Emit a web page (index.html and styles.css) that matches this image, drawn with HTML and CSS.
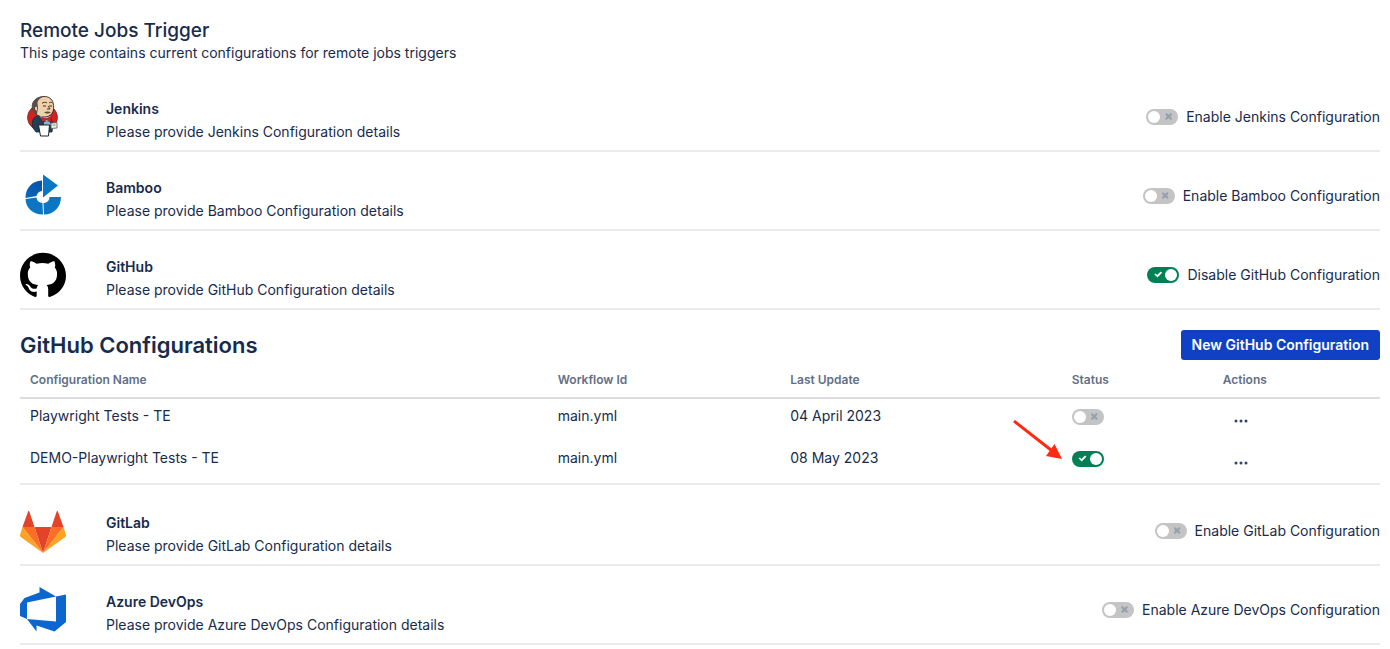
FILE: index.html
```html
<!DOCTYPE html>
<html lang="en">
<head>
<meta charset="utf-8">
<meta name="viewport" content="width=device-width, initial-scale=1">
<title>Remote Jobs Trigger</title>
<link rel="stylesheet" href="styles.css">
</head>
<body>
<main class="page">
  <header class="page-header">
    <h1 class="page-title">Remote Jobs Trigger</h1>
    <p class="page-intro">This page contains current configurations for remote jobs triggers</p>
  </header>

  <section class="provider">
    <svg class="provider-logo" viewBox="0 0 46 46" aria-hidden="true">
      <ellipse cx="22.500" cy="23.500" rx="15" ry="13.500" fill="#d6201f" stroke="#5c3030" stroke-width=".8"/>
      <path d="M13 34c-1-4-1-8 1-10 2-2 5-3 8-3 6 0 10 4 11 9l-1 8H16z" fill="#1f4055" stroke="#182b37" stroke-width=".8"/>
      <path d="M16 20c-4-3-5-9-2-13 2-3 6-4.500 10-4.500 5 0 8 2.500 9 6 1 4 1 8-1 11-2 2-4 3.500-7 3.500-4 0-7-1-9-3z" fill="#efd0ad" stroke="#352822" stroke-width=".9"/>
      <path d="M16 20c-4-3-5-9-2-13 2-3 6-4.500 10-4.500-3 1-6 3-6.500 6L18 14l-1 6z" fill="#55504c"/>
      <path d="M17 13c-2.500-1-3 2.500 0 4z" fill="#efd0ad"/>
      <path d="M22 9.500c1-1.500 4-1.500 5-.5m2 0c1-1 2.500-1 3.500 0M23 12h3m3 0h3M28 12l2 3h-3" fill="none" stroke="#49352c"/>
      <path d="M24 18.500c2-1.500 5-1.500 7 0-2 1.500-5 1.500-7 0z" fill="#71473c"/>
      <path d="M20 22l3 5h7l1-5-5 1.500z" fill="#e6e8ea"/>
      <path d="M21.500 23l1 5 4-2 5 2-.5-5.500-4.500 2z" fill="#d6201f" stroke="#6d1f1d" stroke-width=".5"/>
      <path d="M24 28l3-1 3 1 1 3h-7z" fill="#8ab5cf"/>
      <path d="M31 29l6-.5v5.500l-6 .5z" fill="#edeee9" stroke="#555" stroke-width=".8"/>
      <path d="M32.500 31h3" stroke="#777" stroke-width=".8"/>
      <path d="M18.500 31h11l-1 11h-8z" fill="#fff" stroke="#222"/>
    </svg>
    <div class="provider-text">
      <h2 class="provider-name">Jenkins</h2>
      <p class="provider-note">Please provide Jenkins Configuration details</p>
    </div>
    <label class="toggle-label"><input class="toggle" type="checkbox" role="switch">Enable Jenkins Configuration</label>
  </section>

  <section class="provider">
    <svg class="provider-logo" viewBox="0 0 46 46" aria-hidden="true">
      <defs>
        <linearGradient id="bamboo-shade" x1="0" y1="1" x2="1" y2="0">
          <stop offset="0" stop-color="#0a66b8"/><stop offset="1" stop-color="#0752a8"/>
        </linearGradient>
      </defs>
      <path d="M23 1.500L38 12.500 23 24.500z" fill="#0a76c4"/>
      <path d="M22 7.500v10.500a6.500 6.500 0 0 0-5.500 5L5.500 25C5.500 15 12 8 22 7.500z" fill="url(#bamboo-shade)"/>
      <path d="M5.500 26l11-1.500a6.500 6.500 0 0 0 6 5.500l.5 11.500C13 41.500 6 35.500 5.500 26z" fill="#0a76c4"/>
      <path d="M29.500 24h11.500c0 10-7 17.500-17 17.500L23.500 30c3.500 0 6-2.500 6-6z" fill="#0a76c4"/>
    </svg>
    <div class="provider-text">
      <h2 class="provider-name">Bamboo</h2>
      <p class="provider-note">Please provide Bamboo Configuration details</p>
    </div>
    <label class="toggle-label"><input class="toggle" type="checkbox" role="switch">Enable Bamboo Configuration</label>
  </section>

  <section class="provider">
    <svg class="provider-logo" viewBox="0 0 46 46" aria-hidden="true">
      <path fill-rule="evenodd" d="M23 .8C10.300.8 0 11.100 0 23.800c0 9.800 6.300 18.100 15.100 21.100 1.200.2 1.600-.5 1.600-1.100v-4.200c-6.400 1.400-7.700-2.900-7.700-2.900-1-2.700-2.600-3.400-2.600-3.400-2.100-1.400.2-1.400.2-1.400 2.300.2 3.500 2.400 3.500 2.400 2 3.500 5.400 2.500 6.700 1.900.2-1.500.8-2.500 1.500-3.100-5.100-.6-10.500-2.500-10.500-11.400 0-2.500.9-4.600 2.400-6.200-.2-.6-1-2.900.2-6.100 0 0 1.900-.6 6.300 2.400 3.700-1 7.800-1 11.500 0 4.400-3 6.300-2.400 6.300-2.400 1.300 3.200.5 5.500.2 6.100 1.500 1.600 2.400 3.700 2.400 6.200 0 8.900-5.400 10.800-10.500 11.400.8.700 1.600 2.100 1.600 4.300v6.400c0 .6.400 1.300 1.600 1.100C39.700 41.900 46 33.600 46 23.800 46 11.100 35.700.8 23 .8z"/>
    </svg>
    <div class="provider-text">
      <h2 class="provider-name">GitHub</h2>
      <p class="provider-note">Please provide GitHub Configuration details</p>
    </div>
    <label class="toggle-label"><input class="toggle" type="checkbox" role="switch" checked>Disable GitHub Configuration</label>
  </section>

  <section class="configs">
    <div class="configs-header">
      <h2 class="configs-title">GitHub Configurations</h2>
      <button class="primary-button" type="button">New GitHub Configuration</button>
    </div>
    <table class="configs-table">
      <colgroup><col class="col-name"><col class="col-workflow"><col class="col-update"><col class="col-status"><col class="col-actions"></colgroup>
      <thead>
        <tr><th scope="col">Configuration Name</th><th scope="col">Workflow Id</th><th scope="col">Last Update</th><th scope="col">Status</th><th scope="col">Actions</th></tr>
      </thead>
      <tbody>
        <tr>
          <td>Playwright Tests - TE</td><td>main.yml</td><td>04 April 2023</td>
          <td><div class="status"><input class="toggle" type="checkbox" role="switch" aria-label="Playwright Tests - TE status"></div></td>
          <td><button class="more-button" type="button" aria-label="Actions for Playwright Tests - TE"><svg class="more-icon" viewBox="0 0 14 4" aria-hidden="true"><circle cx="2" cy="2" r="1.500"/><circle cx="7" cy="2" r="1.500"/><circle cx="12" cy="2" r="1.500"/></svg></button></td>
        </tr>
        <tr>
          <td>DEMO-Playwright Tests - TE</td><td>main.yml</td><td>08 May 2023</td>
          <td><div class="status"><input class="toggle" type="checkbox" role="switch" checked aria-label="DEMO-Playwright Tests - TE status">
            <svg class="pointer-arrow" viewBox="0 0 50 40" aria-hidden="true"><path d="M1 1l37 29" stroke="#ff2a12" stroke-width="3"/><path d="M49 39L33 36l8.500-12z" fill="#ff2a12"/></svg></div></td>
          <td><button class="more-button" type="button" aria-label="Actions for DEMO-Playwright Tests - TE"><svg class="more-icon" viewBox="0 0 14 4" aria-hidden="true"><circle cx="2" cy="2" r="1.500"/><circle cx="7" cy="2" r="1.500"/><circle cx="12" cy="2" r="1.500"/></svg></button></td>
        </tr>
      </tbody>
    </table>
  </section>

  <section class="provider">
    <svg class="provider-logo" viewBox="0 0 46 46" aria-hidden="true">
      <path d="M23 45L14.500 19h17z" fill="#e24329"/>
      <path d="M23 45L14.500 19H2.500zM23 45l8.500-26h12z" fill="#fc6d26"/>
      <path d="M2.500 19L0 27q-.3 1.200.7 2L23 45zM43.500 19l2.500 8q.3 1.200-.7 2L23 45z" fill="#fca326"/>
      <path d="M2.500 19h12L9.300 3.500q-.6-1.500-1.200 0zM43.500 19h-12l5.200-15.500q.6-1.500 1.200 0z" fill="#e24329"/>
    </svg>
    <div class="provider-text">
      <h2 class="provider-name">GitLab</h2>
      <p class="provider-note">Please provide GitLab Configuration details</p>
    </div>
    <label class="toggle-label"><input class="toggle" type="checkbox" role="switch">Enable GitLab Configuration</label>
  </section>

  <section class="provider">
    <svg class="provider-logo" viewBox="0 0 46 46" aria-hidden="true">
      <path fill="#0b66d0" fill-rule="evenodd" d="M0 17l4.500-6L19.500 5.500V0L36 9.500l10-2V35L34.500 44.500 16.500 38.500v6L7 32l-7-3zM7 15.500V32l29 2.500v-25z"/>
    </svg>
    <div class="provider-text">
      <h2 class="provider-name">Azure DevOps</h2>
      <p class="provider-note">Please provide Azure DevOps Configuration details</p>
    </div>
    <label class="toggle-label"><input class="toggle" type="checkbox" role="switch">Enable Azure DevOps Configuration</label>
  </section>
</main>
</body>
</html>
```

FILE: styles.css
```css
* { box-sizing: border-box; }

body {
  margin: 0;
  background: #fff;
  color: #172b4d;
  font: 400 14px/20px Inter, "Liberation Sans", sans-serif;
}

h1, h2, p { margin: 0; }

.page { padding: 19px 10px 0 20px; }
.page-header { padding-bottom: 10px; }
.page-title { font-size: 19px; line-height: 24px; font-weight: 500; }

.provider {
  display: flex;
  align-items: flex-start;
  padding: 21px 0 8px;
  border-bottom: 2px solid #ebebeb;
}
.provider-logo { flex: none; width: 46px; height: 46px; margin-right: 40px; }
.provider-text { display: grid; gap: 3px; padding-top: 5px; }
.provider-name { font-size: 14px; line-height: 20px; font-weight: 600; }
.toggle-label {
  display: flex;
  align-items: center;
  gap: 8px;
  height: 46px;
  margin-left: auto;
}

.toggle {
  appearance: none;
  position: relative;
  display: block;
  flex: none;
  width: 32px;
  height: 16px;
  margin: 0;
  border-radius: 8px;
  background: #c4c4c4;
  cursor: pointer;
}
.toggle::before {
  content: "";
  position: absolute;
  top: 2px;
  left: 2px;
  width: 12px;
  height: 12px;
  border-radius: 50%;
  background: #fff;
}
.toggle::after {
  content: "";
  position: absolute;
  top: 4px;
  left: 19px;
  width: 7px;
  height: 7px;
  background: #98a1b0;
  clip-path: polygon(0 18%, 18% 0, 50% 24%, 82% 0, 100% 18%, 76% 50%, 100% 82%, 82% 100%, 50% 76%, 18% 100%, 0 82%, 24% 50%);
}
.toggle:checked { background: #008054; }
.toggle:checked::before { left: 18px; }
.toggle:checked::after {
  left: 6px;
  width: 9px;
  background: #fff;
  clip-path: polygon(8% 48%, 24% 36%, 42% 58%, 80% 8%, 96% 24%, 44% 92%);
}

.configs { padding-top: 20px; margin-bottom: 2px; border-bottom: 2px solid #ebebeb; }
.configs-header { display: flex; align-items: center; justify-content: space-between; }
.configs-title { font-size: 22px; line-height: 28px; font-weight: 600; }
.primary-button {
  height: 30px;
  padding: 0 11px;
  border: 0;
  border-radius: 3px;
  background: #1041c4;
  color: #fff;
  font: inherit;
  font-weight: 600;
  cursor: pointer;
}

.configs-table { width: 100%; table-layout: fixed; border-collapse: separate; border-spacing: 0; }
.col-name { width: 38.8%; }
.col-workflow { width: 17.1%; }
.col-update { width: 20.7%; }
.col-status { width: 11.1%; }
.col-actions { width: 12.3%; }
.configs-table th {
  padding: 10px 10px 7px;
  border-bottom: 2px solid #dcdde4;
  color: #626f86;
  font-size: 12px;
  font-weight: 600;
  text-align: left;
}
.configs-table td { height: 42px; padding: 7px 10px 15px; vertical-align: top; }
.status { position: relative; padding-top: 3px; }
.pointer-arrow { position: absolute; top: -28px; left: -59px; width: 50px; height: 40px; }
.more-button {
  display: block;
  padding: 13px 11px 0;
  border: 0;
  background: none;
  cursor: pointer;
}
.more-icon { display: block; width: 14px; height: 4px; fill: #344563; }
```
